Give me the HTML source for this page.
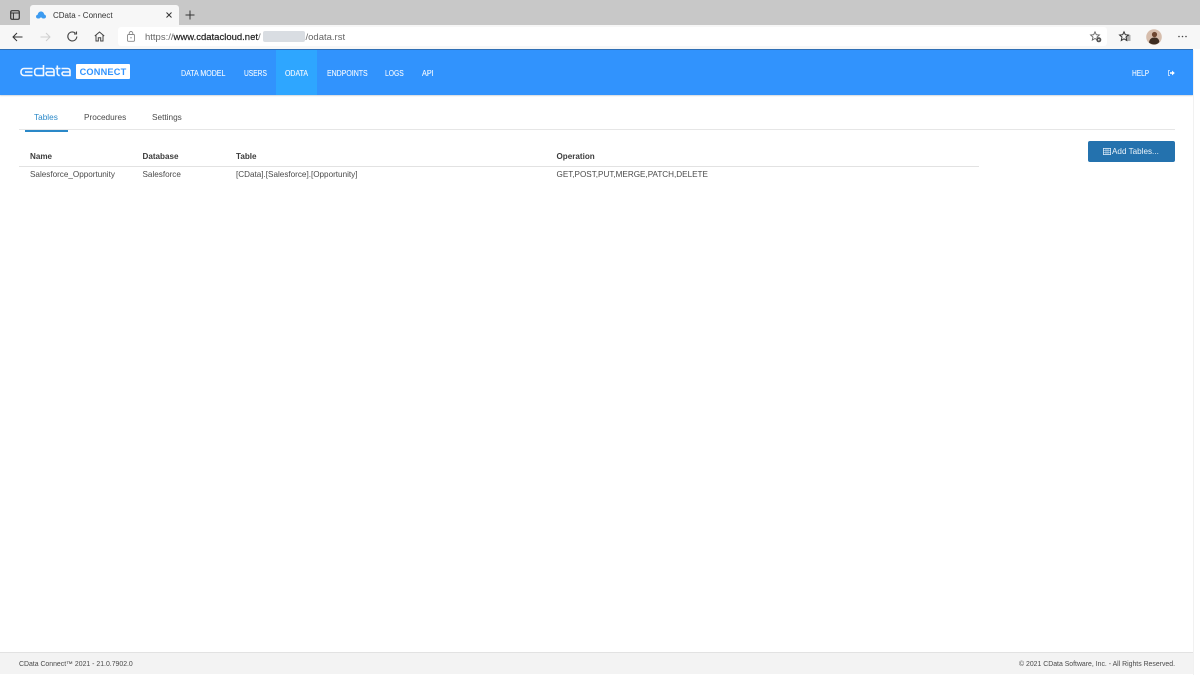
<!DOCTYPE html>
<html lang="en">
<head>
<meta charset="utf-8">
<title>CData - Connect</title>
<style>
html,body{margin:0;padding:0;width:1200px;height:675px;overflow:hidden;background:#fff;font-family:"Liberation Sans",Arial,sans-serif;}
#w{position:relative;width:1200px;height:675px;overflow:hidden;filter:blur(.3px);}
.a{position:absolute;white-space:nowrap;}
svg{position:absolute;overflow:visible;}
.n{color:#f2f8ff;font-size:8.3px;top:68px;line-height:10px;transform-origin:0 50%;-webkit-text-stroke:.12px #f2f8ff;}
.t{font-size:8.15px;line-height:11px;color:#4a4a4a;}
.h{font-size:8.1px;line-height:11px;color:#3c3c3c;font-weight:bold;}
</style>
</head>
<body>
<div id="w">
<!-- browser chrome -->
<div class="a" style="left:0;top:0;width:1200px;height:25px;background:#c8c8c8"></div>
<div class="a" style="left:30px;top:5px;width:149px;height:20px;background:#f7f7f7;border-radius:3px 3px 0 0"></div>
<div class="a" style="left:0;top:25px;width:1200px;height:24px;background:#f7f7f7"></div>
<div class="a" style="left:118px;top:27px;width:989px;height:19px;background:#fff;border-radius:3px"></div>

<svg style="left:10px;top:10px" width="10" height="10" viewBox="0 0 10 10"><rect x=".7" y=".7" width="8.6" height="8.6" rx="1.4" fill="none" stroke="#333" stroke-width="1.2"/><path d="M.7 3H9.300" stroke="#333" stroke-width="1"/><path d="M3.400 3V9" stroke="#333" stroke-width="1"/></svg>
<svg style="left:36px;top:11px" width="10" height="8" viewBox="0 0 10 8"><path d="M2 7.500C.6 7.500 0 6.500 0 5.500C0 4.500.8 3.700 1.700 3.700C2 1.500 3.500.5 5 .5C6.800.5 8 1.800 8.200 3.500C9.300 3.700 10 4.500 10 5.500C10 6.700 9.200 7.500 8 7.500Z" fill="#3d9bf0"/><path d="M3.500 7.500a1.600 1.600 0 0 1 3 0Z" fill="#f7f7f7"/></svg>
<div class="a" style="left:53px;top:9.500px;font-size:8px;line-height:11px;color:#333">CData - Connect</div>
<svg style="left:166px;top:12px" width="6" height="6" viewBox="0 0 6 6"><path d="M.5.5L5.500 5.500M5.500.5L.5 5.500" stroke="#333" stroke-width="1"/></svg>
<svg style="left:185px;top:10px" width="10" height="10" viewBox="0 0 10 10"><path d="M5 .5V9.500M.5 5H9.500" stroke="#333" stroke-width="1"/></svg>

<svg style="left:12px;top:31.500px" width="11" height="10" viewBox="0 0 11 10"><path d="M10.500 5H1M5 1L1 5L5 9" fill="none" stroke="#333" stroke-width="1"/></svg>
<svg style="left:40px;top:31.500px" width="11" height="10" viewBox="0 0 11 10"><path d="M.5 5H10M6 1L10 5L6 9" fill="none" stroke="#cfcfcf" stroke-width="1"/></svg>
<svg style="left:67px;top:31px" width="11" height="11" viewBox="0 0 11 11"><path d="M9.800 5.500A4.500 4.500 0 1 1 8.400 2.200M9.500.5V3H7" fill="none" stroke="#444" stroke-width="1.100"/></svg>
<svg style="left:94px;top:31px" width="11" height="11" viewBox="0 0 11 11"><path d="M.8 5L5.500 1L10.200 5M2 4V10H4.300V6.800H6.700V10H9V4" fill="none" stroke="#444" stroke-width="1"/></svg>
<svg style="left:127px;top:31px" width="8" height="11" viewBox="0 0 8 11"><rect x=".5" y="3.500" width="7" height="6.800" rx="1" fill="none" stroke="#888" stroke-width=".9"/><path d="M2.200 3.500V2.300a1.800 1.800 0 0 1 3.600 0V3.500" fill="none" stroke="#888" stroke-width=".9"/><circle cx="4" cy="6.800" r=".7" fill="#888"/></svg>
<div class="a" style="left:145px;top:31.500px;font-size:9.500px;line-height:12px;color:#666">https://<span style="color:#222;-webkit-text-stroke:.2px #222">www.cdatacloud.net</span>/</div>
<div class="a" style="left:263px;top:31px;width:42px;height:11px;background:#d9dde2;border-radius:2px"></div>
<div class="a" style="left:305.500px;top:31.500px;font-size:9.500px;line-height:12px;color:#666">/odata.rst</div>

<svg style="left:1090px;top:31px" width="12" height="12" viewBox="0 0 12 12"><path d="M5 .8L6.300 3.700L9.400 4L7 6.100L7.700 9.100L5 7.500L2.300 9.100L3 6.100L.6 4L3.700 3.700Z" fill="none" stroke="#666" stroke-width=".9"/><circle cx="8.800" cy="8.800" r="2.500" fill="#555"/><circle cx="8.800" cy="8.800" r=".8" fill="#fff"/></svg>
<svg style="left:1119px;top:31px" width="12" height="11" viewBox="0 0 12 11"><path d="M5 .8L6.300 3.700L9.400 4L7 6.100L7.700 9.500L5 7.800L2.300 9.500L3 6.100L.6 4L3.700 3.700Z" fill="none" stroke="#333" stroke-width="1"/><path d="M8 5H11.500M7.500 7H11.500M7.500 9H11.500" stroke="#333" stroke-width=".8"/></svg>
<svg style="left:1146px;top:29px" width="16" height="16" viewBox="0 0 16 16"><circle cx="8" cy="8" r="7.800" fill="#d6bdac"/><circle cx="8.500" cy="5.500" r="2.600" fill="#6e4630"/><path d="M3 13.500C3.500 10 5.500 8.500 8.500 8.500C11.500 8.500 13 10 13.300 13C11 16.200 6 16.200 3 13.500Z" fill="#3e2d22"/></svg>
<svg style="left:1178px;top:35px" width="9" height="3" viewBox="0 0 9 3"><circle cx="1" cy="1.500" r=".8" fill="#444"/><circle cx="4.500" cy="1.500" r=".8" fill="#444"/><circle cx="8" cy="1.500" r=".8" fill="#444"/></svg>

<!-- header -->
<div class="a" style="left:0;top:49px;width:1193px;height:1px;background:#2f6fb5"></div>
<div class="a" style="left:0;top:50px;width:1193px;height:44.500px;background:#3193fd;box-shadow:0 1px 1px #d5d9de"></div>
<div class="a" style="left:276px;top:50px;width:41px;height:44.500px;background:#2ea6ff"></div>
<div class="a" style="left:1193px;top:50px;width:1px;height:625px;background:#f1f1f1"></div>

<svg style="left:20px;top:64px" width="52" height="13" viewBox="0 0 52 13"><g fill="none" stroke="#f2f8ff" stroke-width="1.600"><path d="M12.500 4.500H4A3 3 0 0 0 1 7.500V8.500A3 3 0 0 0 4 11.500H12.500M5 8H12.500"/><path d="M23.500 1V11.500H17.200A2.500 2.500 0 0 1 14.700 9V7A2.500 2.500 0 0 1 17.200 4.500H23.500"/><path d="M25.700 4.500H31.800A2.200 2.200 0 0 1 34 6.700V11.500H28A2 2 0 0 1 26 9.500A1.700 1.700 0 0 1 28 8H34"/><path d="M37.300 1.500V9A2.500 2.500 0 0 0 39.800 11.500M35.500 4.500H40.500"/><path d="M41.500 4.500H47.800A2.200 2.200 0 0 1 50 6.700V11.500H44A2 2 0 0 1 42 9.500A1.700 1.700 0 0 1 44 8H50"/></g></svg>
<div class="a" style="left:76px;top:64px;width:54px;height:15px;background:#fff;border-radius:1px"></div>
<div class="a" style="left:76px;top:64.500px;width:54px;text-align:center;font-size:9.200px;line-height:15px;font-weight:bold;color:#3193fd;letter-spacing:.2px">CONNECT</div>

<div class="a n" style="left:181px;transform:scaleX(.85)">DATA MODEL</div>
<div class="a n" style="left:244px;transform:scaleX(.8)">USERS</div>
<div class="a n" style="left:285px;transform:scaleX(.84)">ODATA</div>
<div class="a n" style="left:326.500px;transform:scaleX(.84)">ENDPOINTS</div>
<div class="a n" style="left:385px;transform:scaleX(.81)">LOGS</div>
<div class="a n" style="left:422px;transform:scaleX(.87)">API</div>
<div class="a n" style="left:1132px;transform:scaleX(.79)">HELP</div>
<svg style="left:1168px;top:70px" width="7" height="6" viewBox="0 0 7 6"><path d="M2 .5H.5V5.500H2" fill="none" stroke="#e4f1ff" stroke-width=".8"/><path d="M2 2.200H4V.6L6.800 3L4 5.400V3.800H2Z" fill="#fff"/></svg>

<!-- tabs -->
<div class="a" style="left:19px;top:129px;width:1156px;height:1px;background:#e6e6e6"></div>
<div class="a" style="left:25px;top:130px;width:43px;height:2px;background:#2a88c8"></div>
<div class="a" style="left:34px;top:112px;font-size:8.250px;line-height:11px;color:#2a88c8">Tables</div>
<div class="a" style="left:84px;top:112px;font-size:8.250px;line-height:11px;color:#4a4a4a">Procedures</div>
<div class="a" style="left:152px;top:112px;font-size:8.250px;line-height:11px;color:#4a4a4a">Settings</div>

<!-- table -->
<div class="a h" style="left:30px;top:151px">Name</div>
<div class="a h" style="left:142.500px;top:151px">Database</div>
<div class="a h" style="left:236px;top:151px">Table</div>
<div class="a h" style="left:556.500px;top:151px">Operation</div>
<div class="a" style="left:19px;top:166px;width:960px;height:1px;background:#e2e2e2"></div>
<div class="a t" style="left:30px;top:169px">Salesforce_Opportunity</div>
<div class="a t" style="left:142.500px;top:169px">Salesforce</div>
<div class="a t" style="left:236px;top:169px">[CData].[Salesforce].[Opportunity]</div>
<div class="a t" style="left:556.500px;top:169px">GET,POST,PUT,MERGE,PATCH,DELETE</div>

<!-- button -->
<div class="a" style="left:1088px;top:141px;width:87px;height:21px;background:#2472ae;border-radius:2px"></div>
<svg style="left:1103px;top:148px" width="8" height="7" viewBox="0 0 8 7"><rect x=".4" y=".4" width="7.200" height="6.200" fill="none" stroke="#d8e8f5" stroke-width=".8"/><path d="M.5 2.500H7.500M.5 4.500H7.500M3 .5V6.500M5 .5V6.500" stroke="#d8e8f5" stroke-width=".6"/></svg>
<div class="a" style="left:1112px;top:146px;font-size:8.150px;line-height:11px;color:#eaf3fa">Add Tables...</div>

<!-- footer -->
<div class="a" style="left:0;top:652px;width:1193px;height:22px;background:#f3f3f3;border-top:1px solid #e2e2e2;box-sizing:border-box"></div>
<div class="a" style="left:19px;top:658.500px;font-size:6.900px;line-height:11px;color:#4a4a4a">CData Connect™ 2021 - 21.0.7902.0</div>
<div class="a" style="right:25px;top:658.500px;font-size:6.900px;line-height:11px;color:#4a4a4a">© 2021 CData Software, Inc. - All Rights Reserved.</div>
</div>
</body>
</html>
